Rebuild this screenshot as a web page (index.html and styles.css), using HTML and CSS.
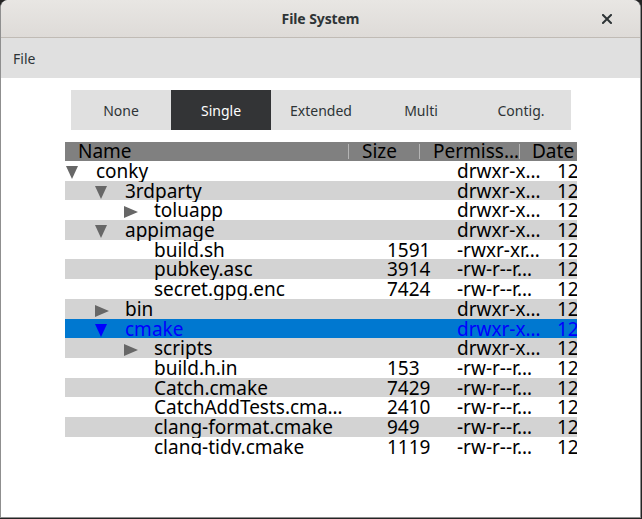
FILE: index.html
```html
<!DOCTYPE html>
<html>
<head>
<meta charset="utf-8">
<link rel="stylesheet" href="styles.css">
</head>
<body>
<div class="window">
  <div class="titlebar">
    <span class="title">File System</span>
    <svg class="close" width="10" height="10" viewBox="0 0 10 10"><path d="M1 1L9 9M9 1L1 9" stroke="#2e3436" stroke-width="2" stroke-linecap="square"/></svg>
  </div>
  <div class="menubar"><span class="menu-item">File</span></div>
  <div class="content">
    <div class="segmented">
      <div class="seg">None</div>
      <div class="seg active">Single</div>
      <div class="seg">Extended</div>
      <div class="seg">Multi</div>
      <div class="seg">Contig.</div>
    </div>
    <div class="tree">
      <div class="row head">
        <div class="c name"><span class="htext">Name</span></div>
        <div class="c size"><span class="htext">Size</span></div>
        <div class="c perm"><span class="htext">Permiss…</span></div>
        <div class="c date last"><span class="htext">Date</span></div>
      </div>
      <div class="body">
        <div class="row">
          <div class="c name l0"><span class="arr"><svg width="12" height="13"><polygon points="0,0 12,0 6,13" /></svg></span><span class="t">conky</span></div>
          <div class="c size"></div><div class="c perm">drwxr-x…</div><div class="c date">12</div>
        </div>
        <div class="row alt">
          <div class="c name l1"><span class="arr"><svg width="12" height="13"><polygon points="0,0 12,0 6,13" /></svg></span><span class="t">3rdparty</span></div>
          <div class="c size"></div><div class="c perm">drwxr-x…</div><div class="c date">12</div>
        </div>
        <div class="row">
          <div class="c name l2"><span class="arr"><svg width="14" height="13"><polygon points="0,1 14,7 0,13" /></svg></span><span class="t">toluapp</span></div>
          <div class="c size"></div><div class="c perm">drwxr-x…</div><div class="c date">12</div>
        </div>
        <div class="row alt">
          <div class="c name l1"><span class="arr"><svg width="12" height="13"><polygon points="0,0 12,0 6,13" /></svg></span><span class="t">appimage</span></div>
          <div class="c size"></div><div class="c perm">drwxr-x…</div><div class="c date">12</div>
        </div>
        <div class="row">
          <div class="c name l2"><span class="arr"></span><span class="t">build.sh</span></div>
          <div class="c size">1591</div><div class="c perm">-rwxr-xr…</div><div class="c date">12</div>
        </div>
        <div class="row alt">
          <div class="c name l2"><span class="arr"></span><span class="t">pubkey.asc</span></div>
          <div class="c size">3914</div><div class="c perm">-rw-r--r…</div><div class="c date">12</div>
        </div>
        <div class="row">
          <div class="c name l2"><span class="arr"></span><span class="t">secret.gpg.enc</span></div>
          <div class="c size">7424</div><div class="c perm">-rw-r--r…</div><div class="c date">12</div>
        </div>
        <div class="row alt">
          <div class="c name l1"><span class="arr"><svg width="14" height="13"><polygon points="0,1 14,7 0,13" /></svg></span><span class="t">bin</span></div>
          <div class="c size"></div><div class="c perm">drwxr-x…</div><div class="c date">12</div>
        </div>
        <div class="row sel">
          <div class="c name l1"><span class="arr"><svg width="12" height="13"><polygon points="0,0 12,0 6,13" /></svg></span><span class="t">cmake</span></div>
          <div class="c size"></div><div class="c perm">drwxr-x…</div><div class="c date">12</div>
        </div>
        <div class="row alt">
          <div class="c name l2"><span class="arr"><svg width="14" height="13"><polygon points="0,1 14,7 0,13" /></svg></span><span class="t">scripts</span></div>
          <div class="c size"></div><div class="c perm">drwxr-x…</div><div class="c date">12</div>
        </div>
        <div class="row">
          <div class="c name l2"><span class="arr"></span><span class="t">build.h.in</span></div>
          <div class="c size">153</div><div class="c perm">-rw-r--r…</div><div class="c date">12</div>
        </div>
        <div class="row alt">
          <div class="c name l2"><span class="arr"></span><span class="t">Catch.cmake</span></div>
          <div class="c size">7429</div><div class="c perm">-rw-r--r…</div><div class="c date">12</div>
        </div>
        <div class="row">
          <div class="c name l2"><span class="arr"></span><span class="t">CatchAddTests.cma…</span></div>
          <div class="c size">2410</div><div class="c perm">-rw-r--r…</div><div class="c date">12</div>
        </div>
        <div class="row alt">
          <div class="c name l2"><span class="arr"></span><span class="t">clang-format.cmake</span></div>
          <div class="c size">949</div><div class="c perm">-rw-r--r…</div><div class="c date">12</div>
        </div>
        <div class="row">
          <div class="c name l2"><span class="arr"></span><span class="t">clang-tidy.cmake</span></div>
          <div class="c size">1119</div><div class="c perm">-rw-r--r…</div><div class="c date">12</div>
        </div>
      </div>
    </div>
  </div>
</div>
</body>
</html>
```

FILE: styles.css
```css
html, body {
  margin: 0;
  padding: 0;
  background: #242424;
  width: 642px;
  height: 519px;
  overflow: hidden;
}

.window {
  width: 639px;
  height: 517px;
  border: 1px solid #8f8f8f;
  border-top: none;
  border-radius: 8px 8px 0 0;
  background: #ffffff;
  display: flex;
  flex-direction: column;
  overflow: hidden;
}

.titlebar {
  height: 37px;
  flex: none;
  background: linear-gradient(#e8e6e3, #dedbd8);
  border-bottom: 1px solid #c0bbb5;
  border-radius: 8px 8px 0 0;
  display: flex;
  align-items: center;
  justify-content: center;
  position: relative;
  font-family: "Noto Sans", "Open Sans", sans-serif;
}

.title {
  font-size: 14px;
  font-weight: 700;
  color: #2e3436;
  letter-spacing: -0.1px;
}

.close {
  position: absolute;
  right: 28px;
  top: 14px;
}

.menubar {
  height: 40px;
  flex: none;
  background: #e0e0e0;
  display: flex;
  align-items: center;
  padding-left: 12px;
  font-family: "Noto Sans", "Open Sans", sans-serif;
  font-size: 14px;
  color: #2e3436;
}

.content {
  flex: 1;
  background: #ffffff;
  padding-top: 12px;
}

.segmented {
  display: flex;
  margin-left: 70px;
  width: 500px;
  height: 40px;
  background: #e0e0e0;
  font-family: "Noto Sans", "Open Sans", sans-serif;
  font-size: 14px;
  color: #2e3436;
}

.seg {
  width: 100px;
  display: flex;
  align-items: center;
  justify-content: center;
}

.seg.active {
  background: #333436;
  color: #ffffff;
}

.tree {
  margin-top: 12px;
  margin-left: 64px;
  width: 512px;
  height: 313px;
  overflow: hidden;
  font-family: "Noto Sans", "Open Sans", sans-serif;
  font-size: 19px;
  color: #000000;
}

.row {
  display: grid;
  grid-template-columns: 284px 71px 100px 57px;
  height: 19.7px;
  line-height: 19.7px;
  white-space: nowrap;
}

.body .row {
  line-height: 21px;
}

.row.head {
  height: 19px;
  line-height: 19px;
  background: #808080;
}

.row.alt {
  background: #d3d3d3;
}

.row.sel {
  background: #0078d0;
  color: #0000ff;
}

.c {
  position: relative;
}

.head .c {
  padding-left: 13px;
  overflow: hidden;
}

.head .c.date {
  padding-left: 12px;
}

.head .c::after {
  content: "";
  position: absolute;
  right: 0;
  top: 2px;
  bottom: 2px;
  width: 1px;
  background: #b4b4b4;
}

.head .c.last::after {
  display: none;
}

.body .size {
  padding-left: 38px;
}

.body .perm {
  padding-left: 37px;
}

.body .date {
  padding-left: 37px;
}

.name {
  display: flex;
  align-items: flex-start;
  overflow: hidden;
  height: 100%;
}

.name.l0 { padding-left: 0; }
.name.l1 { padding-left: 29px; }
.name.l2 { padding-left: 58px; }

.arr {
  width: 30px;
  flex: none;
  height: 100%;
  position: relative;
}

.arr svg {
  position: absolute;
  left: 1px;
  top: 5px;
  fill: #676767;
}

.sel .arr svg {
  fill: #0000ff;
}

.t {
  padding-left: 1px;
}
```
